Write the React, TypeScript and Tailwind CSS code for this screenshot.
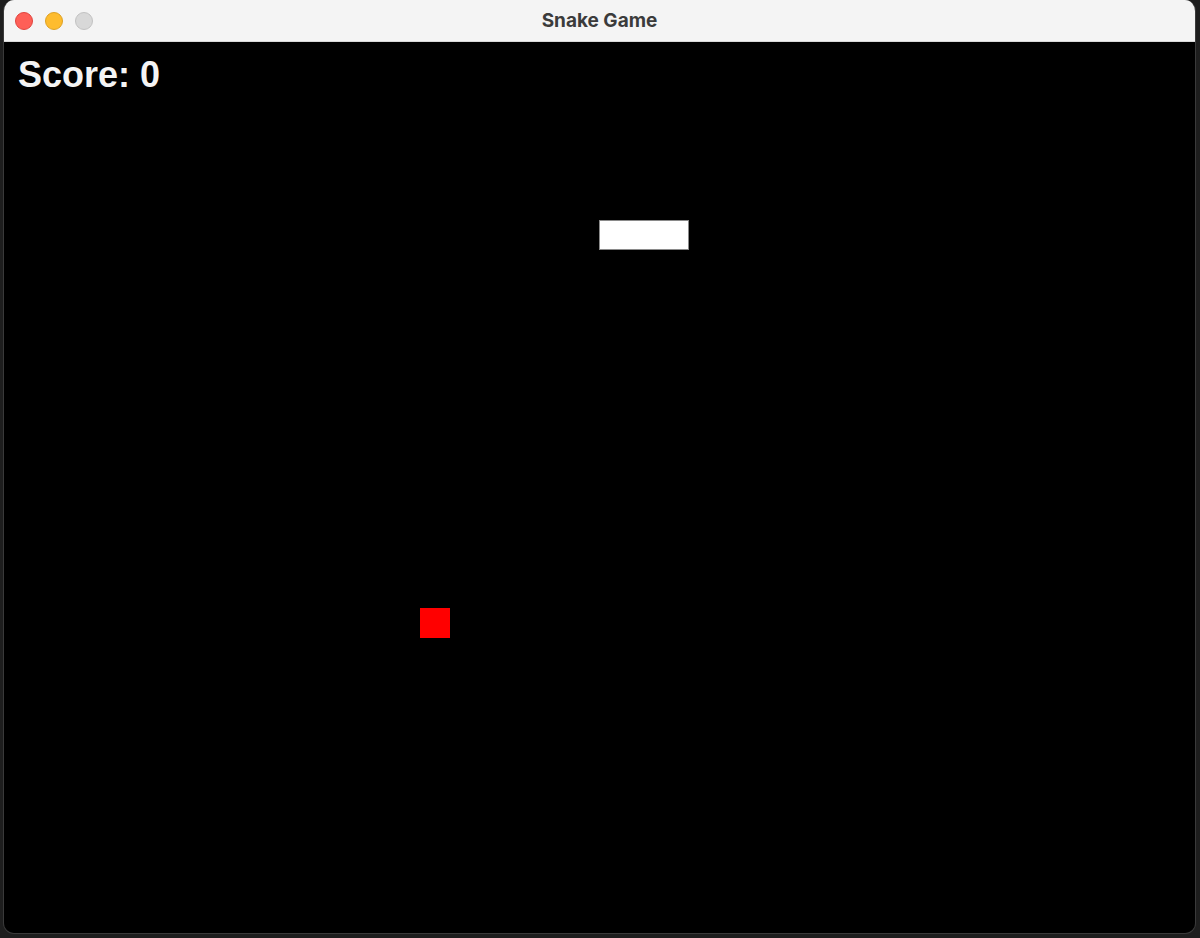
import React from 'react';

const TrafficLights: React.FC = () => (
  <div className="flex items-center gap-[12px] pl-[11px]">
    <span className="w-[18px] h-[18px] rounded-full bg-[#fe5f57] border border-[#e0443e]" />
    <span className="w-[18px] h-[18px] rounded-full bg-[#febc2e] border border-[#dea123]" />
    <span className="w-[18px] h-[18px] rounded-full bg-[#d8d8d8] border border-[#c2c2c2]" />
  </div>
);

export default function App() {
  return (
    <div className="w-[1200px] h-[938px] bg-[#1e1e1e] overflow-hidden flex pl-[3px] pr-[4px] pb-[4px]">
      <div className="flex-1 flex flex-col rounded-[11px] overflow-hidden border border-[#3a3a3a] border-t-0">
        {/* title bar */}
        <div className="h-[42px] bg-[#f4f4f4] relative flex items-center border-b border-[#d9d9d9]">
          <TrafficLights />
          <div
            className="absolute inset-0 flex items-center justify-center pt-[1px] text-[19px] font-bold text-[#3b3b3b]"
            style={{ fontFamily: 'Inter, "Liberation Sans", sans-serif' }}
          >
            Snake Game
          </div>
        </div>
        {/* game canvas */}
        <div className="flex-1 bg-black relative">
          <div
            className="absolute left-[14px] top-[11px] text-[36px] font-bold text-[#f4f4f4] leading-[44px]"
            style={{ fontFamily: '"Liberation Sans", Arial, sans-serif' }}
          >
            Score: 0
          </div>
          <div className="absolute left-[595px] top-[178px] w-[90px] h-[30px] bg-white border border-[#8a8a8a]" />
          <div className="absolute left-[416px] top-[566px] w-[30px] h-[30px] bg-[#ff0000]" />
        </div>
      </div>
    </div>
  );
}
